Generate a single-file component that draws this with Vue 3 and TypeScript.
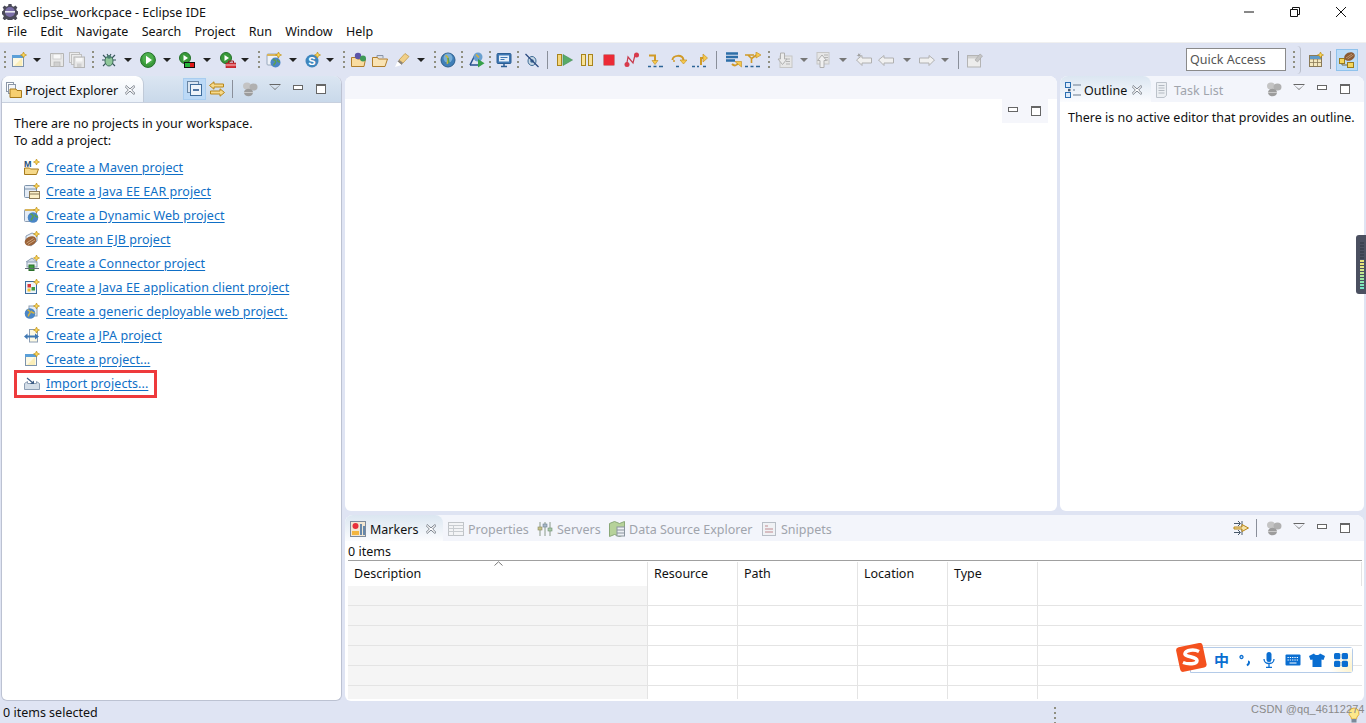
<script setup lang="ts">
import { computed } from 'vue';

type Tool = [string, number];

const menus = ['File', 'Edit', 'Navigate', 'Search', 'Project', 'Run', 'Window', 'Help'];

// toolbar entries: icon name and the x of its centre
const tools: Tool[] = [
  ['grip', 2], ['new', 18], ['drop', 37], ['save', 56], ['saveall', 79], ['grip', 93], ['bug', 108], ['drop', 127],
  ['run', 148], ['drop', 167], ['cov', 187], ['drop', 207], ['ext', 228], ['drop', 247], ['grip', 258],
  ['newj', 273], ['drop', 292], ['snew', 313], ['drop', 332], ['grip', 343], ['fold1', 357], ['fold2', 379],
  ['pencil', 403], ['drop', 423], ['grip', 434], ['globe', 448], ['grip', 462], ['remote', 477], ['grip', 490],
  ['monitor', 504], ['grip', 518], ['skip', 532], ['sep', 547], ['resume', 563], ['pause', 587], ['stop', 609],
  ['disc', 632], ['into', 656], ['over', 678], ['ret', 702], ['sep', 716], ['frame', 732], ['filter', 755],
  ['grip', 769], ['next', 784], ['gdrop', 803], ['prev', 824], ['gdrop', 843], ['backedit', 863], ['back', 887],
  ['gdrop', 907], ['fwd', 927], ['gdrop', 947], ['sep', 957], ['pin', 973],
];

const toolSlots = computed(() =>
  tools.map(([name, x], i) => {
    const left = i === 0 ? 0 : (tools[i - 1][1] + x) / 2;
    const right = i === tools.length - 1 ? x + 12 : (x + tools[i + 1][1]) / 2;
    return { name, key: `${name}-${i}`, width: right - left };
  }),
);

const links = [
  { icon: 'l-maven', text: 'Create a Maven project' },
  { icon: 'l-ear', text: 'Create a Java EE EAR project' },
  { icon: 'l-web', text: 'Create a Dynamic Web project' },
  { icon: 'l-ejb', text: 'Create an EJB project' },
  { icon: 'l-conn', text: 'Create a Connector project' },
  { icon: 'l-client', text: 'Create a Java EE application client project' },
  { icon: 'l-generic', text: 'Create a generic deployable web project.' },
  { icon: 'l-jpa', text: 'Create a JPA project' },
  { icon: 'new', text: 'Create a project...' },
];

const bottomTabs = [
  { icon: 't-props', text: 'Properties', width: 89 },
  { icon: 't-servers', text: 'Servers', width: 72 },
  { icon: 't-dse', text: 'Data Source Explorer', width: 152 },
  { icon: 't-snip', text: 'Snippets', width: 80 },
];

const columns = ['Description', 'Resource', 'Path', 'Location', 'Type', ''];
const rows = [1, 2, 3, 4, 5, 6];
const meterBars = ['#3c4250', '#3c4250', '#3c4250', '#3c4250', '#3c4250', '#3c4250', '#e6e27a', '#e6e27a', '#e3e684', '#d3e68c', '#c2e690', '#aee69a', '#9ce6a4', '#8ce6b0', '#7fe6bc', '#78e6c6'];
</script>

<template>
  <div class="ide">
    <svg class="defs" aria-hidden="true">
      <defs>
        <path id="st" d="M12.5 0l.9 2.100 2.100.9-2.100.9-.9 2.100-.9-2.100-2.100-.9 2.100-.9z" fill="#fbd75b" stroke="#b8860b" stroke-width=".6" />
        <symbol id="close" viewBox="0 0 9 9"><path d="M1 .5l3.500 3L8 .5l1 1-3 3 3 3-1 1-3.500-3-3.500 3-1-1 3-3-3-3z" fill="#fff" stroke="#6c7480" stroke-width=".8" /></symbol>
        <symbol id="new" viewBox="0 0 16 16"><rect x="1.500" y="3.500" width="11" height="11" fill="#fdf9e4" stroke="#7d93ab" /><rect x="1" y="3" width="12" height="3" fill="#5b9fd8" /><path d="M3 14l8-8v8z" fill="#fbeeb8" /><use href="#st" /></symbol>
        <symbol id="save" viewBox="0 0 16 16"><path d="M1.500 1.500h13v13h-13z" fill="#e8e8e8" stroke="#b4b4b4" /><rect x="4" y="2" width="8" height="5" fill="#f8f8f8" stroke="#c4c4c4" stroke-width=".7" /><rect x="5" y="10" width="6" height="4.500" fill="#d0d0d0" stroke="#b4b4b4" stroke-width=".7" /></symbol>
        <symbol id="saveall" viewBox="0 0 16 16"><rect x=".5" y=".5" width="10" height="10" fill="#ececec" stroke="#c0c0c0" /><rect x="2.500" y="2.500" width="10" height="10" fill="#ececec" stroke="#c0c0c0" /><rect x="5" y="5" width="10.500" height="10.500" fill="#e6e6e6" stroke="#b4b4b4" /><rect x="7" y="6" width="6.500" height="3.500" fill="#f8f8f8" /><rect x="8" y="11.500" width="4.500" height="3.500" fill="#cfcfcf" /></symbol>
        <symbol id="bug" viewBox="0 0 16 16"><path d="M2 3l3 3M14 3l-3 3M1 8h3M15 8h-3M2 14l3-3M14 14l-3-3M6 2l1.500 2.500M10 2L8.500 4.500" stroke="#35545a" stroke-width="1.100" fill="none" /><ellipse cx="8" cy="9" rx="4" ry="5" fill="#8fc79a" stroke="#3d6e5a" /><ellipse cx="8" cy="5" rx="2.200" ry="1.800" fill="#4a7f70" /></symbol>
        <symbol id="run" viewBox="0 0 16 16"><circle cx="8" cy="8" r="7.400" fill="#3a9a3a" stroke="#23702a" /><circle cx="8" cy="6.500" r="5.500" fill="#4cae4c" /><path d="M6 3.800l6 4.200-6 4.200z" fill="#fff" /></symbol>
        <symbol id="cov" viewBox="0 0 16 16"><circle cx="6" cy="6" r="5.500" fill="#3a9a3a" stroke="#23702a" /><path d="M4.500 3l4.500 3-4.500 3z" fill="#fff" /><rect x="5" y="10" width="11" height="6" fill="#111" /><rect x="6" y="11" width="5" height="4" fill="#26b53a" /><rect x="11" y="11" width="4" height="4" fill="#e01818" /></symbol>
        <symbol id="ext" viewBox="0 0 16 16"><circle cx="6" cy="6" r="5.500" fill="#3a9a3a" stroke="#23702a" /><path d="M4.500 3l4.500 3-4.500 3z" fill="#fff" /><path d="M6 11h10v5H6z" fill="#d8323a" stroke="#a01c22" stroke-width=".6" /><path d="M8.500 11V9h5v2" fill="none" stroke="#a01c22" /><path d="M6 13h10" stroke="#fff" stroke-width=".7" /></symbol>
        <symbol id="newj" viewBox="0 0 16 16"><rect x="1" y="2" width="11" height="11" rx="1" fill="#eef2f8" stroke="#98a8bc" /><rect x="1" y="2" width="11" height="2" fill="#d8b45c" /><circle cx="9.500" cy="10.500" r="5" fill="#4a86c6" /><path d="M7 7.500c2 .5 3 1.500 2.500 3s-2 1-1.500 3M12 7.500c-1 1 0 2.500 2 2.500" stroke="#5ea04a" stroke-width="1.500" fill="none" /><use href="#st" /></symbol>
        <symbol id="snew" viewBox="0 0 16 16"><circle cx="7" cy="9" r="6.500" fill="#3f86bd" /><text x="7" y="13" font-size="11" font-weight="700" fill="#fff" text-anchor="middle" font-family="Liberation Sans, sans-serif">S</text><use href="#st" /></symbol>
        <symbol id="fold1" viewBox="0 0 16 16"><path d="M.5 5.500h5l1 1.500h8L13 14.500H.5z" fill="#f9dca0" stroke="#b07e2c" /><circle cx="7" cy="4" r="3.200" fill="#5c55a8" /><circle cx="12" cy="6.500" r="3" fill="#3f9a58" /></symbol>
        <symbol id="fold2" viewBox="0 0 16 16"><path d="M5 6V3.500h6V6" fill="#d8dde6" stroke="#8a95a8" /><path d="M.5 5.500h5l1 1.500h9L13 14.500H.5z" fill="#f9e3b4" stroke="#b07e2c" /></symbol>
        <symbol id="pencil" viewBox="0 0 16 16"><path d="M5 8l6-6.500L15 4.500 9 11z" fill="#f0cf88" stroke="#c09a4c" stroke-width=".8" /><path d="M3.500 9.500L5 8l4 3-1.500 2z" fill="#8c8478" /><path d="M1 15l2.500-5.500 4 3.500z" fill="#fff" /></symbol>
        <symbol id="globe" viewBox="0 0 16 16"><circle cx="8" cy="8" r="7" fill="#3f7fb8" stroke="#2c5e8c" /><circle cx="8" cy="6" r="4.500" fill="#78aed8" /><path d="M5.500 3.500c2 1 3 2 2.500 4.500s-1 1.500-.5 4" stroke="#c2b544" stroke-width="1.500" fill="none" /><path d="M8 6l1 5" stroke="#5aa04a" stroke-width="1.500" /></symbol>
        <symbol id="remote" viewBox="0 0 16 16"><path d="M1 13L6 3" stroke="#25508c" stroke-width="1.500" /><path d="M1 13h8" stroke="#25508c" stroke-width="1.500" /><circle cx="9" cy="5" r="4.500" fill="#6aa0d0" /><path d="M7 2.500l3 3" stroke="#d7b23c" stroke-width="1.500" /><path d="M9 7v8.500l6.500-4.200z" fill="#36a04a" /></symbol>
        <symbol id="monitor" viewBox="0 0 16 16"><rect x="1" y="1.500" width="14" height="10" rx="1" fill="#3f78b4" stroke="#2c5e94" /><rect x="3" y="3.500" width="10" height="6" fill="#e6effa" /><path d="M4.500 5.500h7M4.500 7.500h4" stroke="#3f78b4" /><path d="M5 14.500h6M8 11.500v3" stroke="#2c5e94" stroke-width="1.500" /></symbol>
        <symbol id="skip" viewBox="0 0 16 16"><ellipse cx="8" cy="9" rx="4" ry="4.500" fill="#c8d8e6" stroke="#3c6a94" /><circle cx="8" cy="9" r="1.800" fill="#3c6a94" /><path d="M1.500 2l13 13" stroke="#2a4a80" stroke-width="1.300" /></symbol>
        <symbol id="resume" viewBox="0 0 16 16"><rect x=".5" y="2.500" width="4" height="11" fill="#f5d67c" stroke="#a8841c" /><path d="M6 2.500v11l9.500-5.500z" fill="#58ab68" stroke="#3f8a50" stroke-width=".6" /></symbol>
        <symbol id="pause" viewBox="0 0 16 16"><rect x="2.500" y="2.500" width="4" height="11" fill="#f8e29a" stroke="#a8841c" /><rect x="9.500" y="2.500" width="4" height="11" fill="#f8e29a" stroke="#a8841c" /></symbol>
        <symbol id="stop" viewBox="0 0 16 16"><rect x="2.500" y="2.500" width="11" height="11" rx="1" fill="#ec2a36" stroke="#c98a90" /></symbol>
        <symbol id="disc" viewBox="0 0 16 16"><path d="M2.500 13.500L4 5l5 6 2-8" fill="none" stroke="#c83a4c" stroke-width="1.200" /><circle cx="12.500" cy="3" r="2.500" fill="#d83a4c" /><circle cx="3" cy="12.500" r="2.500" fill="#d83a4c" /></symbol>
        <symbol id="into" viewBox="0 0 16 16"><path d="M1 3.500h6v6" fill="none" stroke="#d09a28" stroke-width="2" /><path d="M4 8.500h6l-3 4z" fill="#f6c94e" stroke="#c08a1c" stroke-width=".6" /><path d="M0 14.500h3M5.500 14.500h3M11 14.500h4" stroke="#2d6496" stroke-width="1.500" /></symbol>
        <symbol id="over" viewBox="0 0 16 16"><path d="M1.500 8c0-5 10-6 11 0" fill="none" stroke="#d09a28" stroke-width="2" /><path d="M9 8h7l-3.500 4z" fill="#f6c94e" stroke="#c08a1c" stroke-width=".6" /><path d="M5 14.500h3" stroke="#2d6496" stroke-width="1.500" /><circle cx="3" cy="9" r="1" fill="#d09a28" /></symbol>
        <symbol id="ret" viewBox="0 0 16 16"><path d="M9 13V6h3" fill="none" stroke="#d09a28" stroke-width="2" /><path d="M11 2l4.500 4-4.500 4z" fill="#f6c94e" stroke="#c08a1c" stroke-width=".6" /><path d="M0 14.500h3M5 14.500h2M11 14.500h3" stroke="#2d6496" stroke-width="1.500" /></symbol>
        <symbol id="frame" viewBox="0 0 16 16"><path d="M0 1.500h12M0 5h12M0 8.500h9" stroke="#2d6ea8" stroke-width="2.300" /><path d="M6 12c2 2 5 2 6-1" fill="none" stroke="#d09a28" stroke-width="2" /><path d="M9 9.500h6.500V15z" fill="#f6c94e" stroke="#c08a1c" stroke-width=".6" /></symbol>
        <symbol id="filter" viewBox="0 0 16 16"><path d="M0 3h9M3 3l3.500 3.500M6.500 6.500V11" fill="none" stroke="#d09a28" stroke-width="1.600" /><path d="M6.500 6.500l5-3.500" fill="none" stroke="#d09a28" stroke-width="1.600" /><path d="M11 0l5 3-5 3z" fill="#f6c94e" stroke="#c08a1c" stroke-width=".6" /><path d="M0 14.500h3M5.500 14.500h3M11 14.500h4" stroke="#2d6496" stroke-width="1.500" /></symbol>
        <symbol id="next" viewBox="0 0 16 16"><rect x="3" y="4" width="12" height="11.500" fill="#e6e6e6" stroke="#c6c6c6" /><path d="M9 7h4M9 9.500h4M9 12h4" stroke="#b4b4b4" /><path d="M3.500 1h4v6H10l-4.500 5.500L1 7h2.500z" fill="#ececec" stroke="#b0b0b0" /></symbol>
        <symbol id="prev" viewBox="0 0 16 16"><rect x="1" y=".5" width="12" height="11.500" fill="#e6e6e6" stroke="#c6c6c6" /><path d="M8 3h4M8 5.500h4M8 8h4" stroke="#b4b4b4" /><path d="M4 15.500h4v-7h2.500L6 3 1.500 8.500H4z" fill="#f0f0f0" stroke="#b0b0b0" /></symbol>
        <symbol id="backedit" viewBox="0 0 16 16"><path d="M.5 8L6 3.500V6h9.500v5H6v2.500z" fill="#f0f0f0" stroke="#b0b0b0" /><path d="M2 1l1 1.500L4.500 1 4 3l1.500 1H3.500l-.5 2-.5-2H.5L2 3z" fill="#a0a0a0" /></symbol>
        <symbol id="back" viewBox="0 0 16 16"><path d="M.5 8L6 3.500V6h9.500v5H6v2.500z" fill="#f0f0f0" stroke="#b0b0b0" /></symbol>
        <symbol id="fwd" viewBox="0 0 16 16"><path d="M15.500 8L10 3.500V6H.5v5H10v2.500z" fill="#f0f0f0" stroke="#b0b0b0" /></symbol>
        <symbol id="pin" viewBox="0 0 16 16"><rect x=".5" y="3.500" width="13" height="11.500" fill="#ececec" stroke="#b4b4b4" /><rect x="1" y="4" width="12" height="2.500" fill="#cfcfcf" /><path d="M8 8l5-6 2.500 2-5 6z" fill="#c4c4c4" stroke="#a4a4a4" stroke-width=".6" /></symbol>
        <symbol id="persp" viewBox="0 0 16 16"><rect x="1.500" y="3.500" width="12" height="11" fill="#f4e8c0" stroke="#8a7a58" /><path d="M1.500 7h12M5.500 7v7.500M9.500 7v7.500M1.500 10.500h12" stroke="#8a7a58" stroke-width=".8" /><rect x="2" y="4" width="11" height="3" fill="#5f9ac8" /><use href="#st" /></symbol>
        <symbol id="jee" viewBox="0 0 16 16"><rect x=".5" y="6.500" width="5" height="5" fill="#f5d65c" stroke="#9a7c1c" /><rect x="8.500" y="10.500" width="6" height="5" fill="#f5d65c" stroke="#9a7c1c" /><path d="M3 11.500V13h5.500" fill="none" stroke="#7a6a3c" /><ellipse cx="10.500" cy="4.500" rx="5.500" ry="4" fill="#8a5a34" transform="rotate(-25 10.500 4.500)" /><path d="M7 6l6-4M8.500 7l6-4" stroke="#d2b08a" stroke-width=".7" /></symbol>
        <symbol id="t-project" viewBox="0 0 16 16"><rect x=".5" y=".5" width="7" height="9" fill="#fff" stroke="#8c98a8" /><rect x="2.500" y="2.500" width="7" height="9" fill="#f4f6f9" stroke="#8c98a8" /><path d="M4 7h6l1 1.500h4.500v7H4z" fill="#f6cf70" stroke="#a67a1c" /></symbol>
        <symbol id="collapse" viewBox="0 0 16 16"><rect x=".5" y=".5" width="11" height="11" fill="#dbe6f2" stroke="#6a86a4" /><rect x="3.500" y="3.500" width="11" height="11" fill="#eef4fa" stroke="#3e6c9c" /><path d="M6 9h6" stroke="#1c4c84" stroke-width="1.500" /></symbol>
        <symbol id="link" viewBox="0 0 16 16"><path d="M.5 4.500L5 .8V3h9.500v3H5v2.200z" fill="#f6d98a" stroke="#b88618" /><path d="M15.500 11.500L11 7.800V10H1.500v3H11v2.200z" fill="#f6d98a" stroke="#b88618" /></symbol>
        <symbol id="balls" viewBox="0 0 16 16"><ellipse cx="5" cy="5" rx="4" ry="3.500" fill="#c4c4c4" /><ellipse cx="11.500" cy="6" rx="4" ry="3.500" fill="#b0b0b0" /><ellipse cx="6.500" cy="11.500" rx="4.500" ry="3.800" fill="#9c9c9c" /><path d="M2 11.500h9" stroke="#d4d4d4" stroke-width=".8" /></symbol>
        <symbol id="outline" viewBox="0 0 16 16"><rect x=".5" y=".5" width="5" height="5" fill="#dcebfa" stroke="#2a6eb0" /><rect x=".5" y="10.500" width="5" height="5" fill="#dcebfa" stroke="#2a6eb0" /><path d="M8 3h8M8 8h2M8 13h8" stroke="#6a7c90" stroke-width="1.200" /><rect x="3" y="6.800" width="2.500" height="2.500" fill="#4a5c70" /></symbol>
        <symbol id="tasks" viewBox="0 0 16 16"><path d="M2.500.5h10v13l-2.500 2H2.500z" fill="#eceff3" stroke="#bcc2ca" /><path d="M4.500 3.500h6M4.500 6h6M4.500 8.500h6M4.500 11h6" stroke="#b4bac2" /></symbol>
        <symbol id="markers" viewBox="0 0 16 16"><rect x=".5" y=".5" width="15" height="15" fill="#f2e7d2" stroke="#7c8a9c" /><circle cx="5.500" cy="5" r="3" fill="#e8303a" /><rect x="2" y="10" width="7" height="4" fill="#f4b640" /><path d="M11 3v11M14 5v9" stroke="#38689c" stroke-width="1.500" /></symbol>
        <symbol id="t-props" viewBox="0 0 16 16"><rect x=".5" y="1.500" width="15" height="13" fill="#f3f4f6" stroke="#c0c4c8" /><path d="M.5 4.500h15M.5 7.500h15M.5 10.500h15M5.500 4.500v10" stroke="#c8ccd0" /></symbol>
        <symbol id="t-servers" viewBox="0 0 16 16"><path d="M3 1v14M8 1v14M13 1v14" stroke="#8a9a8a" /><rect x="1" y="6" width="4" height="3" fill="#c6c28a" stroke="#8a8a60" stroke-width=".6" /><rect x="6" y="3" width="4" height="3" fill="#a8b8c8" stroke="#708090" stroke-width=".6" /><rect x="11" y="7" width="4" height="3" fill="#a8c8a8" stroke="#709070" stroke-width=".6" /></symbol>
        <symbol id="t-dse" viewBox="0 0 16 16"><path d="M.5 2.500l5-2 5 2 5-2v13l-5 2-5-2-5 2z" fill="#b6d29a" stroke="#8aa878" /><rect x="8" y="6" width="7.500" height="9" fill="#eceff3" stroke="#8a949e" /><path d="M8 9h7.500M8 12h7.500" stroke="#8a949e" /></symbol>
        <symbol id="t-snip" viewBox="0 0 16 16"><rect x="1.500" y="1.500" width="13" height="13" fill="#f0f2f5" stroke="#b8bec6" /><path d="M4 5h3M4 8h8M4 11h8" stroke="#c08a90" /></symbol>
        <symbol id="pinlog" viewBox="0 0 16 16"><path d="M1 3.500h6M5 1l2.500 2.500L5 6M1 12.500h6M5 10l2.500 2.500L5 15M9 1v14" stroke="#4a5a6a" fill="none" /><path d="M1 7h8V4.500L15.500 8 9 11.500V9H1z" fill="#f6e3a8" stroke="#b88618" /></symbol>
        <symbol id="l-maven" viewBox="0 0 16 16"><text x="0" y="8" font-size="9" font-weight="700" fill="#27507c" font-family="Liberation Sans, sans-serif">M</text><path d="M.5 9h5l1 1h8l-2 5.500H.5z" fill="#f6d98a" stroke="#a67a1c" /><use href="#st" /></symbol>
        <symbol id="l-ear" viewBox="0 0 16 16"><rect x=".5" y="2.500" width="12" height="12" rx="1" fill="#e4ecf6" stroke="#7d93ab" /><path d="M.5 6h12" stroke="#7d93ab" /><rect x="5.500" y="8.500" width="10" height="7" fill="#fbf0c8" stroke="#8a7a58" /><path d="M5.500 11h10" stroke="#8a7a58" /><use href="#st" /></symbol>
        <symbol id="l-web" viewBox="0 0 16 16"><rect x=".5" y="2.500" width="12" height="12" rx="1" fill="#e4ecf6" stroke="#8c9eb4" /><rect x="1" y="2" width="9" height="2" fill="#d8b45c" /><circle cx="9" cy="10.500" r="5.300" fill="#4a86c6" /><path d="M6.500 7c2 .5 3 1.500 2.500 3s-2 1-1.500 3.500M11.500 7.500c-1 1 .5 2.500 2.500 2.500" stroke="#5ea04a" stroke-width="1.500" fill="none" /><use href="#st" /></symbol>
        <symbol id="l-ejb" viewBox="0 0 16 16"><path d="M2 5l6-3 5 2v6l-6 5-5-3z" fill="#e8eef4" stroke="#8c9eb4" /><ellipse cx="6.500" cy="10" rx="6" ry="4.500" fill="#9a6238" transform="rotate(-25 6.500 10)" /><path d="M2.500 12l7-4.500M4 13.500l7-4.500" stroke="#dcb890" stroke-width=".8" /><use href="#st" /></symbol>
        <symbol id="l-conn" viewBox="0 0 16 16"><path d="M2 7L8 3l5 4" fill="#d4dce6" stroke="#8c9eb4" /><rect x="3" y="7" width="10" height="5" fill="#e8eef4" stroke="#8c9eb4" /><rect x="5" y="10" width="5" height="5.500" fill="#3f9a3f" stroke="#2a6e2a" /><path d="M1 13.500h14" stroke="#606a74" /><use href="#st" /></symbol>
        <symbol id="l-client" viewBox="0 0 16 16"><rect x="1.500" y="2.500" width="11" height="12" fill="#eef3f9" stroke="#3c6e9e" /><rect x="3.500" y="5" width="3.500" height="3.500" fill="#d83a3a" /><rect x="7.500" y="8" width="3.500" height="3.500" fill="#3f9a3f" /><rect x="3.500" y="9.500" width="3" height="3" fill="#f0c030" /><use href="#st" /></symbol>
        <symbol id="l-generic" viewBox="0 0 16 16"><rect x="5" y="3" width="8" height="10" fill="#e4ecf6" stroke="#8c9eb4" /><circle cx="6" cy="10.500" r="5.300" fill="#4a86c6" /><path d="M3.500 7c2 .5 3 1.500 2.500 3s-2 1-1.500 3.500M8 8c-1 1 .5 2 2.500 2" stroke="#d7b23c" stroke-width="1.500" fill="none" /><use href="#st" /></symbol>
        <symbol id="l-jpa" viewBox="0 0 16 16"><rect x="5.500" y="2.500" width="8" height="12.500" fill="#fdf9e4" stroke="#8c9eb4" /><path d="M0 9.500l3.500-3v2H11v-2l4 3-4 3v-2H3.500v2z" fill="#3f78b4" /><use href="#st" /></symbol>
        <symbol id="l-import" viewBox="0 0 16 16"><path d="M.5 8.500l3-2v2h9v-2l3 2v6H.5z" fill="#d4dee8" stroke="#8c9eb4" /><path d="M3 3l6 5" stroke="#3c5c84" stroke-width="1.200" /><path d="M6 9h4V5.500z" fill="#3c5c84" /></symbol>
      </defs>
    </svg>

    <header class="titlebar">
      <svg class="app-logo" viewBox="0 0 16 16"><path d="M6.500 0h3l.4 2 1.800.7 1.700-1.200 2 2-1.200 1.700.8 1.800 2 .4v3l-2 .4-.8 1.800 1.200 1.700-2 2-1.700-1.200-1.800.8-.4 2h-3l-.4-2-1.800-.8-1.700 1.200-2-2 1.200-1.700-.8-1.800-2-.4v-3l2-.4.8-1.800-1.200-1.700 2-2 1.700 1.200 1.800-.7z" fill="#4a4a58" /><circle cx="8" cy="8" r="5" fill="#7a6ea8" /><path d="M3 7h10v1.600H3z" fill="#e8e8f0" /></svg>
      <span class="app-title">eclipse_workcpace - Eclipse IDE</span>
      <div class="win-btns">
        <svg viewBox="0 0 12 12"><path d="M1 6h10" stroke="#111" /></svg>
        <svg viewBox="0 0 12 12"><path d="M1.500 3.500h7v7h-7zM3.500 3.500v-2h7v7h-2" fill="none" stroke="#111" /></svg>
        <svg viewBox="0 0 12 12"><path d="M1 1l10 10M11 1L1 11" stroke="#111" /></svg>
      </div>
    </header>

    <nav class="menubar">
      <span v-for="m in menus" :key="m">{{ m }}</span>
    </nav>

    <div class="toolbar">
      <div class="tools">
        <div v-for="t in toolSlots" :key="t.key" class="slot" :style="{ width: t.width + 'px' }">
          <i v-if="t.name === 'grip'" class="grip"></i>
          <i v-else-if="t.name === 'sep'" class="sep"></i>
          <i v-else-if="t.name === 'drop'" class="drop"></i>
          <i v-else-if="t.name === 'gdrop'" class="drop off"></i>
          <svg v-else class="ic"><use :href="'#' + t.name" /></svg>
        </div>
      </div>
      <div class="quick">Quick Access</div>
      <i class="grip quick-grip"></i>
      <i class="curve"></i>
      <svg class="ic persp"><use href="#persp" /></svg>
      <i class="sep persp-sep"></i>
      <span class="persp-on"><svg class="ic"><use href="#jee" /></svg></span>
    </div>

    <main class="workbench">
      <section class="panel explorer">
        <div class="tabs focused">
          <div class="tab on explorer-tab">
            <svg class="ic"><use href="#t-project" /></svg>
            <span>Project Explorer</span>
            <svg class="close"><use href="#close" /></svg>
          </div>
          <div class="tab-tools">
            <span class="toggled"><svg class="ic"><use href="#collapse" /></svg></span>
            <svg class="ic link-ic"><use href="#link" /></svg>
            <i class="sep small"></i>
            <svg class="ic balls"><use href="#balls" /></svg>
            <i class="view-menu"></i>
            <i class="mini"></i>
            <i class="maxi"></i>
          </div>
        </div>
        <div class="explorer-body">
          <p>There are no projects in your workspace.<br />To add a project:</p>
          <ul class="links">
            <li v-for="l in links" :key="l.text">
              <svg class="ic"><use :href="'#' + l.icon" /></svg>
              <a>{{ l.text }}</a>
            </li>
            <li class="marked">
              <svg class="ic"><use href="#l-import" /></svg>
              <a>Import projects...</a>
            </li>
          </ul>
        </div>
      </section>

      <div class="right-side">
        <div class="upper">
          <section class="panel editor">
            <div class="editor-head"></div>
            <div class="editor-btns"><i class="mini"></i><i class="maxi"></i></div>
          </section>
          <section class="panel outline">
            <div class="tabs">
              <div class="tab on outline-tab">
                <svg class="ic"><use href="#outline" /></svg>
                <span>Outline</span>
                <svg class="close"><use href="#close" /></svg>
              </div>
              <div class="tab dim task-tab">
                <svg class="ic"><use href="#tasks" /></svg>
                <span>Task List</span>
              </div>
              <div class="tab-tools">
                <svg class="ic balls"><use href="#balls" /></svg>
                <i class="view-menu"></i>
                <i class="mini"></i>
                <i class="maxi"></i>
              </div>
            </div>
            <p class="outline-msg">There is no active editor that provides an outline.</p>
          </section>
        </div>

        <section class="panel markers">
          <div class="tabs">
            <div class="tab on markers-tab">
              <svg class="ic"><use href="#markers" /></svg>
              <span>Markers</span>
              <svg class="close"><use href="#close" /></svg>
            </div>
            <div v-for="t in bottomTabs" :key="t.text" class="tab dim" :style="{ width: t.width + 'px' }">
              <svg class="ic"><use :href="'#' + t.icon" /></svg>
              <span>{{ t.text }}</span>
            </div>
            <div class="tab-tools">
              <svg class="ic"><use href="#pinlog" /></svg>
              <i class="sep small"></i>
              <svg class="ic balls"><use href="#balls" /></svg>
              <i class="view-menu"></i>
              <i class="mini"></i>
              <i class="maxi"></i>
            </div>
          </div>
          <div class="count">0 items</div>
          <div class="table">
            <div class="thead">
              <div v-for="c in columns" :key="c" class="cell">{{ c }}</div>
              <svg class="caret" viewBox="0 0 9 5"><path d="M.5 4.500L4.500 .8l4 3.700" fill="none" stroke="#777" /></svg>
            </div>
            <div v-for="r in rows" :key="r" class="trow">
              <div v-for="c in columns" :key="c" class="cell"></div>
            </div>
          </div>
        </section>
      </div>
    </main>

    <footer class="statusbar">
      <span>0 items selected</span>
      <i class="grip status-grip"></i>
      <svg class="bulb" viewBox="0 0 12 16"><path d="M6 1a5 5 0 0 1 3 9l-.5 2h-5L3 10A5 5 0 0 1 6 1z" fill="#fde88a" stroke="#e0b040" /><rect x="3.500" y="12" width="5" height="3.500" fill="#7c8a9a" /></svg>
    </footer>

    <div class="watermark">CSDN @qq_46112274</div>

    <div class="ime">
      <svg class="ime-logo" viewBox="0 0 32 30"><rect x="2" y="2" width="27" height="25" rx="3" fill="#f4511e" transform="rotate(-12 15 15)" /><path d="M23 8.500C18 6 10 7 9 10.500s12 3 12 7-9 4-14 2" fill="none" stroke="#fff" stroke-width="3.500" /></svg>
      <span class="ime-zh">中</span>
      <svg class="ime-ic" viewBox="0 0 16 16"><circle cx="4.500" cy="5" r="1.500" fill="none" stroke="#0a6ed1" stroke-width="1.300" /><path d="M11 9.500c1.500 0 1.500 2-1 4" fill="none" stroke="#0a6ed1" stroke-width="2" /></svg>
      <svg class="ime-ic" viewBox="0 0 16 16"><rect x="5.500" y="0" width="5" height="10" rx="2.500" fill="#0a6ed1" /><path d="M3 7c0 6 10 6 10 0M8 12v3M5 15.500h6" fill="none" stroke="#0a6ed1" stroke-width="1.300" /></svg>
      <svg class="ime-ic" viewBox="0 0 16 16"><rect x=".5" y="2.500" width="15" height="11" rx="1" fill="#0a6ed1" /><path d="M2.500 5.500h11M2.500 8h11" stroke="#fff" stroke-dasharray="1.300 1" /><path d="M4.500 11h7" stroke="#fff" /></svg>
      <svg class="ime-ic" viewBox="0 0 16 16"><path d="M5 1.500L0 4l1.500 4 2-.5V15h9V7.500l2 .5L16 4l-5-2.500c-1 2-5 2-6 0z" fill="#0a6ed1" /></svg>
      <span class="ime-grid"><svg class="ime-ic" viewBox="0 0 16 16"><rect x="1" y="1" width="6.300" height="6.300" rx="1.500" fill="#0a6ed1" /><rect x="8.700" y="1" width="6.300" height="6.300" rx="1.500" fill="#0a6ed1" /><rect x="1" y="8.700" width="6.300" height="6.300" rx="1.500" fill="#0a6ed1" /><rect x="8.700" y="8.700" width="6.300" height="6.300" rx="1.500" fill="#0a6ed1" /></svg></span>
    </div>

    <div class="meter">
      <i v-for="(c, i) in meterBars" :key="i" :style="{ background: c }"></i>
    </div>
  </div>
</template>

<style>
html,
body {
  margin: 0;
  overflow: hidden;
}
</style>

<style scoped>
.ide {
  position: relative;
  width: 1366px;
  height: 723px;
  display: flex;
  flex-direction: column;
  background: #dfe4f3;
  font-family: "Noto Sans", "Open Sans", sans-serif;
  font-size: 12.5px;
  color: #111;
  overflow: hidden;
}
.defs {
  position: absolute;
  width: 0;
  height: 0;
}
i {
  display: block;
  font-style: normal;
}
.ic {
  width: 16px;
  height: 16px;
  display: block;
  flex: none;
}

.titlebar {
  height: 21px;
  display: flex;
  align-items: center;
  background: #fff;
  padding: 3px 0 0 2px;
  box-sizing: border-box;
}
.app-logo {
  width: 16px;
  height: 16px;
}
.app-title {
  margin-left: 5px;
}
.win-btns {
  margin-left: auto;
  display: flex;
  gap: 34px;
  padding-right: 19px;
}
.win-btns svg {
  width: 12px;
  height: 12px;
}

.menubar {
  height: 21px;
  display: flex;
  align-items: center;
  gap: 13.3px;
  padding-left: 7px;
  background: #fff;
  box-sizing: border-box;
}

.toolbar {
  height: 34px;
  display: flex;
  align-items: center;
  background: #dfe4f3;
  border-top: 1px solid #f0f0f0;
  box-sizing: border-box;
}
.tools {
  display: flex;
  align-items: center;
}
.slot {
  display: flex;
  justify-content: center;
  align-items: center;
  height: 24px;
  flex: none;
}
.grip {
  width: 2px;
  height: 18px;
  background: repeating-linear-gradient(#8f8f80 0 2px, transparent 2px 5px);
}
.sep {
  width: 1px;
  height: 18px;
  background: #8a8f9a;
}
.drop {
  width: 0;
  height: 0;
  border-left: 4px solid transparent;
  border-right: 4px solid transparent;
  border-top: 4px solid #222;
}
.drop.off {
  border-top-color: #777;
}
.quick {
  margin-left: 201px;
  width: 100px;
  height: 23px;
  box-sizing: border-box;
  border: 1px solid #8a8a8a;
  background: #fff;
  color: #555;
  padding-left: 3px;
  line-height: 21px;
  flex: none;
}
.quick-grip {
  margin-left: 7px;
}
.curve {
  width: 3px;
  height: 28px;
  margin-left: 2px;
  border-right: 1px solid #b8bdc8;
  border-radius: 0 6px 6px 0;
}
.persp {
  margin-left: 7px;
}
.persp-sep {
  margin-left: 6px;
}
.persp-on {
  margin-left: 5px;
  width: 22px;
  height: 22px;
  display: flex;
  align-items: center;
  justify-content: center;
  background: #bcdcf8;
  border: 1px solid #8fc2ec;
  box-sizing: border-box;
}

.workbench {
  flex: 1;
  min-height: 0;
  display: flex;
  gap: 3px;
  padding-left: 1px;
}
.panel {
  position: relative;
  background: #fff;
  border-radius: 8px 8px 6px 6px;
  overflow: hidden;
  display: flex;
  flex-direction: column;
  box-sizing: border-box;
}
.explorer {
  width: 341px;
  border: 1px solid #bcc2d2;
  border-top: 0;
}
.tabs {
  position: relative;
  flex: none;
  height: 26px;
  display: flex;
  align-items: stretch;
  background: #f3f5fb;
}
.tabs.focused {
  background: linear-gradient(#dbe6f2, #c9d9ea);
  border-bottom: 1px solid #c8d0de;
  box-sizing: content-box;
}
.tab {
  display: flex;
  align-items: center;
  gap: 4px;
  box-sizing: border-box;
  padding: 2px 0 0 5px;
  flex: none;
}
.tab.on {
  border-radius: 0 8px 0 0;
}
.explorer-tab {
  width: 142px;
  gap: 3px;
  padding-left: 4px;
  background: linear-gradient(#ffffff, #e9f0f8);
  border-right: 1px solid #c0cad8;
}
.outline-tab {
  width: 91px;
  gap: 3px;
  background: linear-gradient(#dbe6f1, #fbfcfe);
}
.outline-tab .close {
  margin-left: 2px;
}
.task-tab {
  margin-left: -2px;
}
.markers-tab {
  width: 98px;
  background: linear-gradient(#dbe6f1, #fbfcfe);
}
.dim {
  color: #a0a4ac;
}
.close {
  width: 10px;
  height: 10px;
  margin-left: 4px;
}
.tab-tools {
  position: absolute;
  right: 0;
  top: 0;
  height: 26px;
  display: flex;
  align-items: center;
  padding-right: 14px;
}
.focused .tab-tools {
  padding-right: 15px;
}
.toggled {
  width: 23px;
  height: 22px;
  display: flex;
  align-items: center;
  justify-content: center;
  background: #bcd9f6;
  margin-right: 3px;
  box-sizing: border-box;
  border: 1px solid #a9cdf0;
}
.link-ic {
  margin-right: 7px;
}
.sep.small {
  height: 18px;
  margin-right: 9px;
}
.balls {
  margin-right: 11px;
}
.markers .tab-tools .ic:first-child {
  margin-right: 7px;
}
.view-menu {
  width: 0;
  height: 0;
  margin: -4px 0 0 0;
  border-left: 6px solid transparent;
  border-right: 6px solid transparent;
  border-top: 6px solid #666;
  position: relative;
}
.view-menu::after {
  content: "";
  position: absolute;
  left: -5px;
  top: -5px;
  width: 0;
  height: 0;
  border-left: 5px solid transparent;
  border-right: 5px solid transparent;
  border-top: 4px solid #f3f5fb;
}
.focused .view-menu::after {
  border-top-color: #d5e1ee;
}
.mini {
  width: 8px;
  height: 3px;
  margin: -4px 0 0 12px;
  border: 1px solid #666;
  background: #fff;
}
.maxi {
  width: 8px;
  height: 7px;
  margin-left: 13px;
  border: 1px solid #666;
  border-top-width: 2px;
  box-sizing: content-box;
  background: #fff;
}
.explorer-body {
  flex: 1;
  padding: 12px 0 0 12px;
}
.explorer-body p {
  margin: 0;
  line-height: 17px;
}
.links {
  list-style: none;
  margin: 6px 0 0 10px;
  padding: 0;
}
.links li {
  display: flex;
  align-items: center;
  gap: 6px;
  height: 24px;
  width: fit-content;
  position: relative;
}
.links a {
  color: #0f6fc6;
  text-decoration: underline;
  text-underline-offset: 2px;
  letter-spacing: .07px;
}
.marked::after {
  content: "";
  position: absolute;
  left: -10px;
  right: -9px;
  top: -1px;
  bottom: -3px;
  border: 3px solid #ee3a3c;
}

.right-side {
  flex: 1;
  min-width: 0;
  display: flex;
  flex-direction: column;
  gap: 4px;
  padding-right: 2px;
}
.upper {
  height: 435px;
  flex: none;
  display: flex;
  gap: 3px;
}
.editor {
  width: 712px;
}
.editor-head {
  height: 23px;
  background: #f5f6fb;
}
.editor-btns {
  position: absolute;
  right: 9px;
  top: 23px;
  width: 46px;
  height: 24px;
  background: #f5f6fb;
  display: flex;
  align-items: center;
}
.editor-btns .mini {
  margin-left: 6px;
}
.outline {
  flex: 1;
}
.outline-msg {
  margin: 7px 0 0 8px;
  white-space: nowrap;
}
.markers {
  flex: 1;
  min-height: 0;
}
.count {
  flex: none;
  height: 19px;
  line-height: 21px;
  padding-left: 3px;
}
.table {
  margin: 0 2px 0 3px;
  border-top: 1px solid #a0a0a0;
  height: 138px;
  overflow: hidden;
}
.thead,
.trow {
  display: grid;
  grid-template-columns: 300px 90px 120px 90px 90px 1fr;
  position: relative;
}
.thead .cell {
  height: 24px;
  padding: 3px 0 0 6px;
  border-right: 1px solid #e4e4e4;
  box-sizing: border-box;
  line-height: 17px;
  margin-top: 1px;
}
.thead .cell:last-child {
  border-right: 0;
}
.caret {
  position: absolute;
  left: 146px;
  top: 0;
  width: 9px;
  height: 5px;
}
.trow {
  height: 20px;
}
.trow .cell {
  box-sizing: border-box;
  border-right: 1px solid #e4e4e4;
  border-bottom: 1px solid #e4e4e4;
}
.trow .cell:first-child {
  background: #f5f5f5;
}
.trow .cell:last-child {
  border-right: 0;
}

.statusbar {
  height: 22px;
  flex: none;
  display: flex;
  align-items: center;
  padding-left: 3px;
  position: relative;
}
.status-grip {
  position: absolute;
  left: 1054px;
  top: 6px;
  height: 16px;
}
.bulb {
  position: absolute;
  left: 1348px;
  top: 6px;
  width: 12px;
  height: 16px;
}
.watermark {
  position: absolute;
  left: 1251px;
  top: 703px;
  font-family: "Liberation Sans", sans-serif;
  font-size: 11px;
  color: #8a8a8a;
  letter-spacing: .1px;
}

.ime {
  position: absolute;
  left: 1190px;
  top: 647px;
  width: 163px;
  height: 26px;
  box-sizing: border-box;
  background: #fff;
  border: 1px solid #b4cbe8;
  border-radius: 0 3px 3px 0;
  display: flex;
  align-items: center;
  padding-left: 23px;
  gap: 8px;
}
.ime-logo {
  position: absolute;
  left: -15px;
  top: -5px;
  width: 32px;
  height: 30px;
}
.ime-zh {
  color: #0a6ed1;
  font-family: "Noto Sans CJK SC", sans-serif;
  font-weight: 700;
  font-size: 15px;
  width: 16px;
  line-height: 16px;
  text-align: center;
}
.ime-ic {
  width: 16px;
  height: 16px;
  flex: none;
}
.ime-grid {
  background: radial-gradient(circle at 90% 80%, #fdf3cc, #fff 70%);
  height: 24px;
  width: 24px;
  display: flex;
  align-items: center;
  justify-content: center;
  margin-left: -4px;
}

.meter {
  position: absolute;
  right: 0;
  top: 235px;
  width: 10px;
  height: 59px;
  box-sizing: border-box;
  padding: 7px 0 0 4px;
  background: #4b5060;
  border-radius: 3px 0 0 3px;
  display: flex;
  flex-direction: column;
  gap: 1px;
}
.meter i {
  height: 2px;
  width: 4px;
}
</style>
